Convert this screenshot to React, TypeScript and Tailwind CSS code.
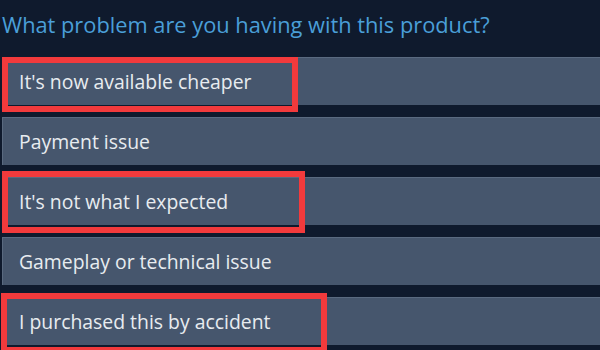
import React from "react";

const items = [
  { label: "It's now available cheaper", box: "left-[-1px] top-[-1px] w-[296px] h-[55px]" },
  { label: "Payment issue", box: "" },
  { label: "It's not what I expected", box: "left-[-1px] top-[-7px] w-[303px] h-[62px]" },
  { label: "Gameplay or technical issue", box: "" },
  { label: "I purchased this by accident", box: "left-[-2px] top-[-5px] w-[326px] h-[60px]" },
];

export default function App() {
  return (
    <div
      className="w-[600px] h-[350px] overflow-hidden bg-[#0f1a2d]"
      style={{ fontFamily: '"Open Sans", "Noto Sans", sans-serif' }}
    >
      <div className="pl-[2px] pt-[10px] h-[57px] text-[21.8px] leading-[30px] text-[#4a9fd8]">
        What problem are you having with this product?
      </div>
      <div className="flex flex-col gap-[12px] pl-[2px]">
        {items.map((it, i) => (
          <div
            key={i}
            className="relative h-[48px] w-[600px] flex items-center pl-[16px] bg-[#46566d] border-t border-l border-[#5a6a80] text-[19.4px] text-[#e8ecf0]"
          >
            {it.label}
            {it.box && (
              <div className={`absolute border-[6px] border-[#f23a3c] ${it.box}`} />
            )}
          </div>
        ))}
      </div>
    </div>
  );
}
